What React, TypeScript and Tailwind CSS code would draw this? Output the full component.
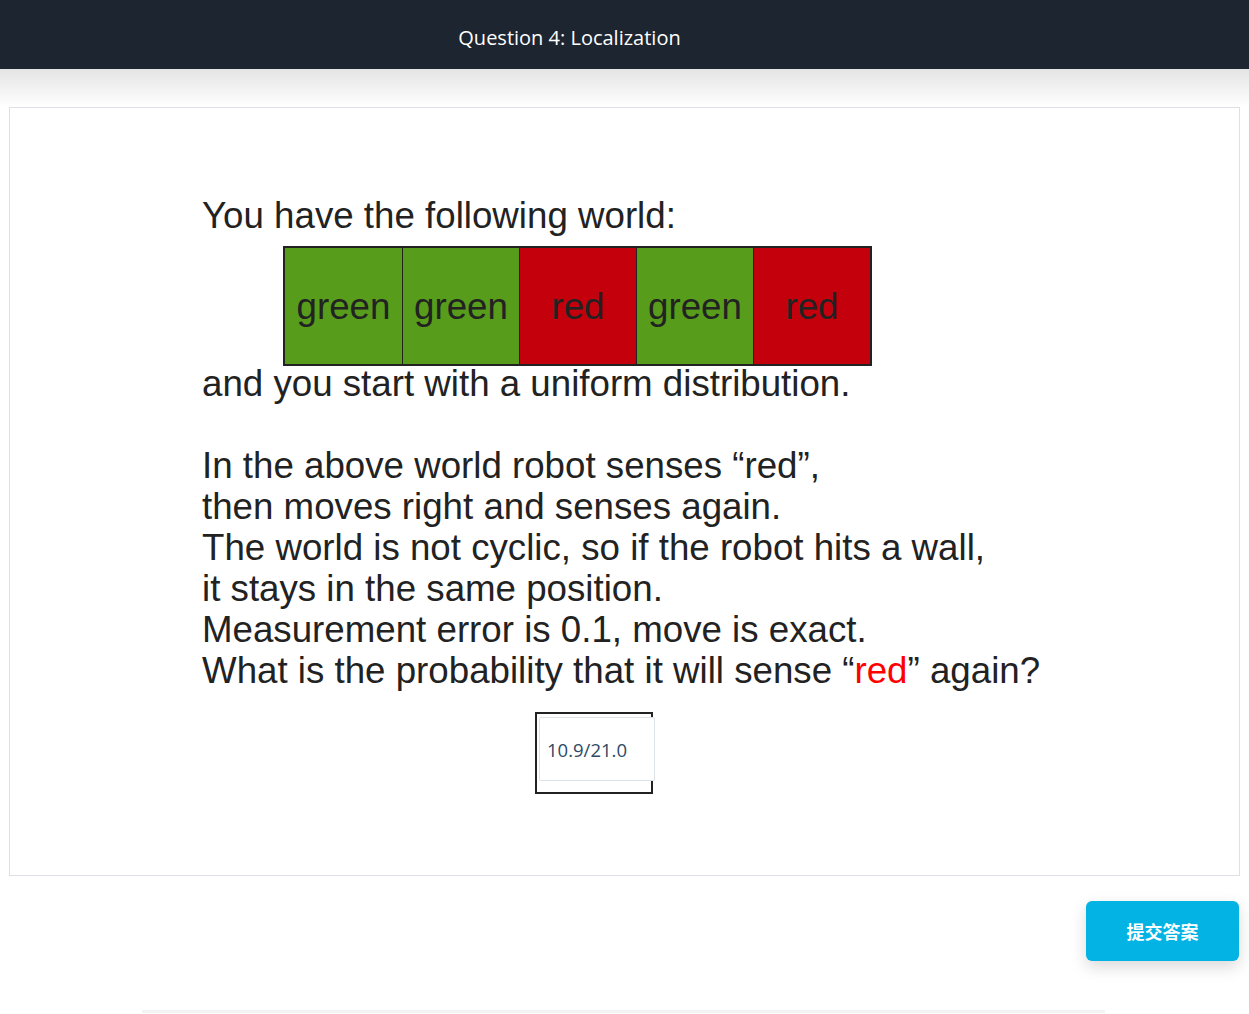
const CELLS = [
  { label: 'green', color: 'bg-[#589c1c]' },
  { label: 'green', color: 'bg-[#589c1c]' },
  { label: 'red', color: 'bg-[#c4000c]' },
  { label: 'green', color: 'bg-[#589c1c]' },
  { label: 'red', color: 'bg-[#c4000c]' },
]

export default function App() {
  return (
    <div className="min-h-[1014px] bg-white font-['Open_Sans',sans-serif]">
      {/* Top bar */}
      <header className="h-[69px] bg-[#1d2530] flex items-center justify-center pr-[110px] pt-[6px]">
        <h1 className="text-white text-[20px] font-normal">Question 4: Localization</h1>
      </header>

      <div className="bg-gradient-to-b from-[#e4e4e4] to-white h-[38px]" />

      {/* Question card */}
      <div className="mx-[9px] border border-[#dde1e6] h-[769px] bg-white">
        <div className="pl-[192px] pt-[87px] font-['Liberation_Sans',Arial,sans-serif] text-[36.7px] leading-[41px] text-[#222]">
          <p>You have the following world:</p>
          <div className="mt-[10px] ml-[81px] flex w-fit border-2 border-[#222]">
            {CELLS.map((c, i) => (
              <div
                key={i}
                className={`w-[117px] h-[116px] flex items-center justify-center ${c.color} ${i > 0 ? 'border-l border-[#222]' : ''}`}
              >
                {c.label}
              </div>
            ))}
          </div>
          <p className="-mt-[3px]">and you start with a uniform distribution.</p>
          <p className="mt-[41px]">
            In the above world robot senses “red”,<br />
            then moves right and senses again.<br />
            The world is not cyclic, so if the robot hits a wall,<br />
            it stays in the same position.<br />
            Measurement error is 0.1, move is exact.<br />
            What is the probability that it will sense “<span className="text-[#f00]">red</span>” again?
          </p>
          <div className="mt-[21px] ml-[333px] w-[118px] h-[82px] border-2 border-[#222] pl-[2px] pt-[3px] overflow-visible">
            <input
              readOnly
              value="10.9/21.0"
              className="w-[116px] h-[64px] border border-[#dbe2e8] rounded-[2px] px-[7px] text-[18.5px] text-[#2e4a66] font-['Open_Sans',sans-serif] bg-white outline-none"
            />
          </div>
        </div>
      </div>

      {/* Submit */}
      <div className="flex justify-end pr-[10px] mt-[25px]">
        <button className="w-[153px] h-[60px] rounded-[6px] bg-[#02b3e4] text-white text-[18px] font-bold shadow-[0_6px_16px_rgba(0,0,0,0.15)] font-['Noto_Sans_CJK_SC',sans-serif]">
          提交答案
        </button>
      </div>

      <div className="mt-[49px] mx-[142px] mr-[144px] h-[3px] bg-[#f3f3f3]" />
    </div>
  )
}
